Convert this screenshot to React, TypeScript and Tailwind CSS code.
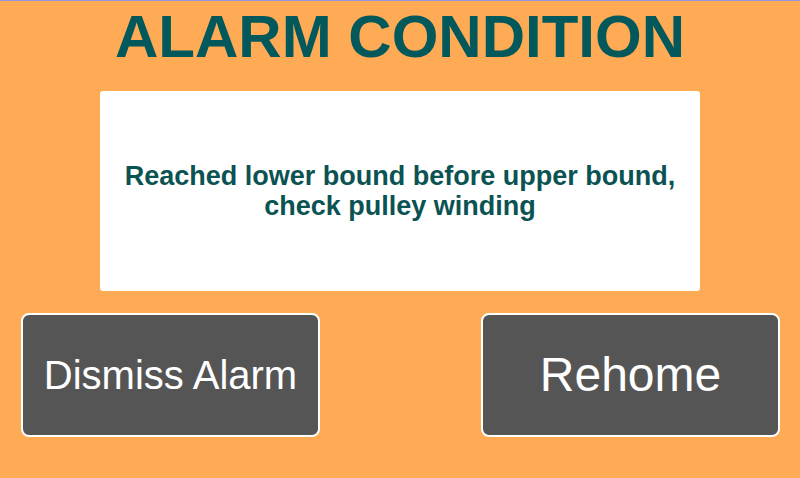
export default function App() {
  return (
    <div className="flex h-[478px] w-[800px] flex-col items-center overflow-hidden border-t border-[#9a93df] bg-[#ffaa55] font-['Liberation_Sans',Arial,sans-serif]">
      <h1 className="mt-[1px] h-[70px] text-[60px] font-bold leading-[70px] text-[#02585a]">ALARM CONDITION</h1>

      <div className="mt-[19px] flex h-[200px] w-[600px] items-center justify-center rounded-[3px] bg-white">
        <p className="text-center text-[27px] font-bold leading-[30px] text-[#0b5352]">
          Reached lower bound before upper bound,
          <br />
          check pulley winding
        </p>
      </div>

      <div className="mt-[22px] flex w-full justify-between pl-[21px] pr-[20px]">
        <button
          type="button"
          className="flex h-[124px] w-[299px] items-center justify-center rounded-[8px] border-2 border-white bg-[#555555] text-[40px] text-white"
        >
          Dismiss Alarm
        </button>
        <button
          type="button"
          className="flex h-[124px] w-[299px] items-center justify-center rounded-[8px] border-2 border-white bg-[#555555] text-[48px] text-white"
        >
          Rehome
        </button>
      </div>
    </div>
  );
}
